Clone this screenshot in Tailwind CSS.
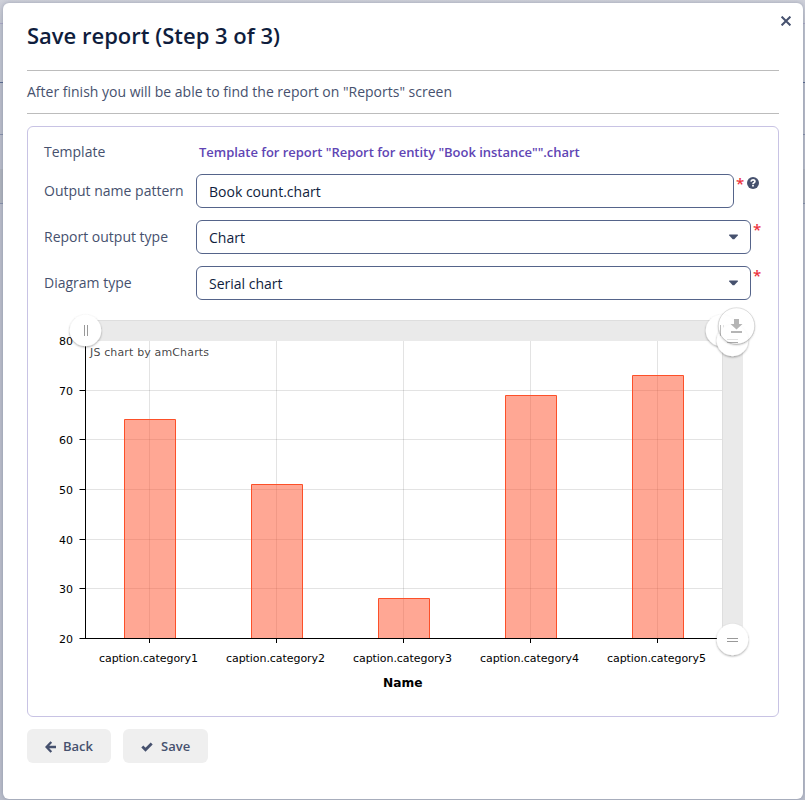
<!DOCTYPE html>
<html lang="en">
<head>
<meta charset="utf-8">
<title>Save report</title>
<script src="https://cdn.jsdelivr.net/npm/@tailwindcss/browser@4"></script>
</head>
<body class="relative h-[800px] w-[805px] overflow-hidden bg-[#b9bdca] p-[3px] pr-[2px] pb-[1px] font-['Open_Sans','Noto_Sans',sans-serif] text-[14px] text-[#46516e]">
<!-- dimmed page behind the dialog -->
<div class="absolute inset-0">
  <div class="h-[24px] border-b border-[#aaa8c4] bg-linear-to-b from-[#cfd1da] to-[#c2c5d0]"></div>
  <div class="h-[59px] border-b border-[#5b6b90] bg-[#bfc3cf]"></div>
  <div class="h-[52px] border-b border-[#8791ab]"></div>
  <div class="h-[34px]"></div>
  <div class="h-[35px] border-b border-[#8791ab] bg-[#b0b4be]"></div>
</div>
<main class="relative h-[796px] w-[800px] rounded-[6px] bg-white px-[24px] shadow-[0_0_4px_rgba(70,80,110,0.35)]">
  <button class="absolute top-[13px] right-[12px]" aria-label="Close">
    <svg class="block" width="10" height="10" viewBox="0 0 10 10" stroke="#46516e" stroke-width="2"><path d="M.6.6 9.4 9.4M9.400.6.6 9.4"/></svg>
  </button>
  <h1 class="h-[67px] pt-[16px] text-[22px] leading-[32px] font-semibold whitespace-nowrap text-[#0f1d3d]">Save report (Step 3 of 3)</h1>
  <p class="h-[44px] border-y border-[#bcbcbc] leading-[42px]">After finish you will be able to find the report on "Reports" screen</p>
  <section class="mt-[12px] h-[591px] rounded-[6px] border border-[#c8c3e4]">
    <div class="flex h-[47px] pl-[16px]">
      <span class="w-[155px] leading-[50px]">Template</span>
      <span class="text-[13px] leading-[50px] font-semibold tracking-[-0.03px] text-[#6045b4]">Template for report "Report for entity "Book instance"".chart</span>
    </div>
    <div class="flex h-[46px] pl-[16px]">
      <span class="w-[152px] leading-[34px]">Output name pattern</span>
      <div class="h-[34px] w-[538px] rounded-[6px] border border-[#55648a] px-[12px] leading-[33px] text-[#0f1d3d]">Book count.chart</div>
      <span class="ml-[2px] w-[8px] text-[15px] leading-[18px] font-semibold text-[#ed323d]">*</span>
      <svg class="mt-[3px] ml-[3px]" width="12" height="12" viewBox="0 0 12 12"><circle cx="6" cy="6" r="6" fill="#46516e"/><path d="M4 4.600C4.200 2.300 7.900 2.300 7.900 4.500 7.900 5.900 6 5.700 6 7.200" fill="none" stroke="#fff" stroke-width="1.700"/><path d="M5.100 8h1.800v1.600H5.100z" fill="#fff"/></svg>
    </div>
    <div class="flex h-[46px] pl-[16px]">
      <span class="w-[152px] leading-[34px]">Report output type</span>
      <div class="flex h-[34px] w-[555px] items-center justify-between rounded-[6px] border border-[#55648a] pr-[12.5px] pl-[12px] leading-[33px] text-[#0f1d3d]"><span>Chart</span><svg width="9" height="6" viewBox="0 0 9 6"><path d="M.2.5h8.600v1L5.300 5.300H3.700L.2 1.500z" fill="#46516e"/></svg></div>
      <span class="ml-[2px] text-[15px] leading-[18px] font-semibold text-[#ed323d]">*</span>
    </div>
    <div class="flex h-[46px] pl-[16px]">
      <span class="w-[152px] leading-[34px]">Diagram type</span>
      <div class="flex h-[34px] w-[555px] items-center justify-between rounded-[6px] border border-[#55648a] pr-[12.5px] pl-[12px] leading-[33px] text-[#0f1d3d]"><span>Serial chart</span><svg width="9" height="6" viewBox="0 0 9 6"><path d="M.2.5h8.600v1L5.300 5.300H3.700L.2 1.500z" fill="#46516e"/></svg></div>
      <span class="ml-[2px] text-[15px] leading-[18px] font-semibold text-[#ed323d]">*</span>
    </div>
    <svg class="-mt-[8px] block font-['DejaVu_Sans',sans-serif]" width="750" height="396" viewBox="28 304 750 396" font-size="11">
      <defs><filter id="sh" x="-30%" y="-30%" width="160%" height="160%"><feDropShadow dx="0" dy="1" stdDeviation="1.3" flood-color="#000" flood-opacity=".38"/></filter></defs>
      <path d="M86 320h636v21H86zM722 341h21v298h-21z" fill="#eaeaea"/>
      <path d="M86 320.5H722M722.5 341V638" stroke="#dedede"/>
      <path d="M86 390.5H722M86 439.5H722M86 489.5H722M86 539.5H722M86 588.5H722M149.5 341V638M276.5 341V638M403.5 341V638M530.5 341V638M657.5 341V638" stroke="#000" stroke-opacity=".11" fill="none"/>
      <g fill="#ff5029" fill-opacity=".5" stroke="#fc5029">
        <path d="M124.500 638V419.500h51V638M251.500 638V484.500h51V638M378.500 638V598.500h51V638M505.500 638V395.500h51V638M632.500 638V375.500h51V638"/>
      </g>
      <path d="M85.500 341V638.500M79.500 638.500H722M79.500 390.500h6M79.500 439.500h6M79.500 489.500h6M79.500 539.500h6M79.500 588.500h6M149.500 638v5M276.500 638v5M403.500 638v5M530.500 638v5M657.500 638v5" stroke="#000" fill="none"/>
      <g text-anchor="end"><text x="73" y="345">80</text><text x="73" y="395">70</text><text x="73" y="444">60</text><text x="73" y="494">50</text><text x="73" y="544">40</text><text x="73" y="593">30</text><text x="73" y="643">20</text></g>
      <text x="90" y="356" textLength="119" fill="#000" fill-opacity=".75">JS chart by amCharts</text>
      <g><text x="99" y="662" textLength="99">caption.category1</text><text x="226" y="662" textLength="99">caption.category2</text><text x="353" y="662" textLength="99">caption.category3</text><text x="480" y="662" textLength="99">caption.category4</text><text x="607" y="662" textLength="99">caption.category5</text></g>
      <text x="383" y="687" font-size="12" font-weight="bold" textLength="39.500" lengthAdjust="spacingAndGlyphs">Name</text>
      <g filter="url(#sh)"><circle cx="85.500" cy="330.500" r="15.700" fill="#fff"/></g>
      <path d="M84.500 325v11M87.500 325v11" stroke="#999"/>
      <g filter="url(#sh)"><circle cx="721.500" cy="330.500" r="15.700" fill="#fff"/></g>
      <path d="M720.500 325v11M723.500 325v11" stroke="#888"/>
      <g filter="url(#sh)"><circle cx="732.500" cy="340.500" r="15.700" fill="#fff"/></g>
      <path d="M727 339.500h11M727 342.500h11" stroke="#777"/>
      <!-- export button, translucent over the scrollbar grips -->
      <g opacity=".78"><g filter="url(#sh)"><circle cx="736.500" cy="325.800" r="18" fill="#fff"/></g></g>
      <path d="M720.500 325v11" stroke="#bbb"/>
      <path d="M727 342.500h11" stroke="#aaa"/>
      <circle cx="736.500" cy="326" r="18.200" fill="none" stroke="#000" stroke-opacity=".12"/>
      <path d="M734 319h5v5h3.500l-6 5.500-6-5.500h3.500zM731 331h11v2h-11z" fill="#b5b5b5"/>
      <g filter="url(#sh)"><circle cx="732.500" cy="639.500" r="15.700" fill="#fff"/></g>
      <path d="M727 638.500h11M727 641.500h11" stroke="#999"/>
    </svg>
  </section>
  <div class="mt-[12px] flex gap-[12px] text-[13px] font-semibold">
    <button class="flex h-[34px] w-[84px] items-center rounded-[6px] bg-[#efefef] pt-[1px] pl-[18px]"><svg class="mr-[7px]" width="11" height="12" viewBox="0 0 11 12" fill="none" stroke="#46516e" stroke-width="2.300"><path d="M6.300 1 1.500 6l4.800 5M2 6h9"/></svg>Back</button>
    <button class="flex h-[34px] w-[85px] items-center rounded-[6px] bg-[#efefef] pt-[1px] pl-[18px]"><svg class="mr-[8px]" width="12" height="10" viewBox="0 0 12 10" fill="none" stroke="#46516e" stroke-width="2.800"><path d="m1.300 4.600 3.200 3.200L10.700 1.600"/></svg>Save</button>
  </div>
</main>
</body>
</html>
